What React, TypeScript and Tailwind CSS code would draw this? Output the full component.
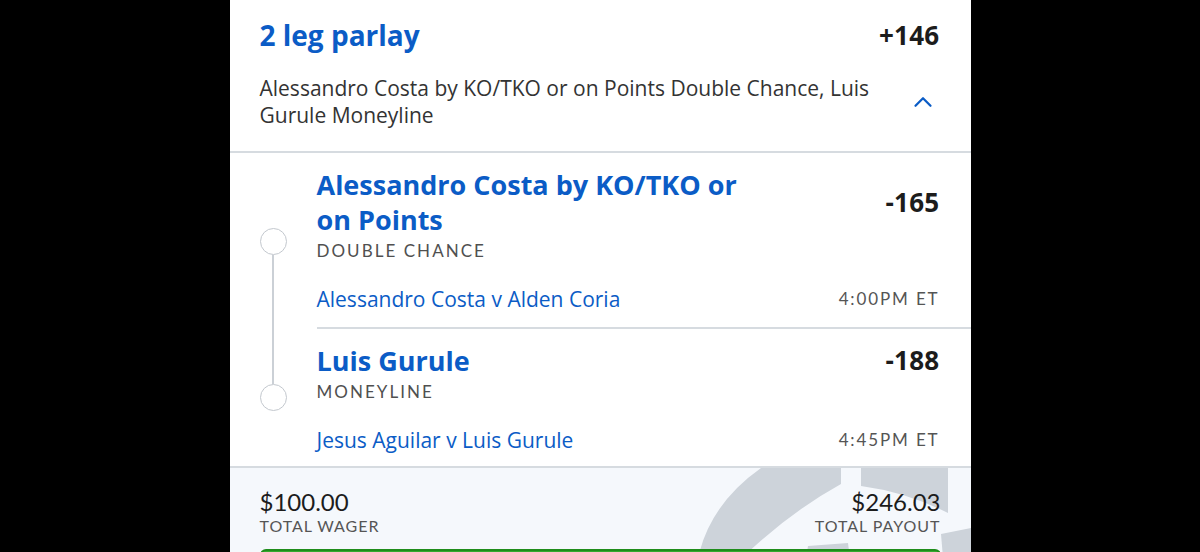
import { ChevronUp } from 'lucide-react'

const BLUE = 'text-[#0b5cc6]'
const WIDE = 'font-["Open_Sans",sans-serif]'

type Leg = {
  title: string
  market: string
  odds: string
  matchup: string
  time: string
}

const legs: Leg[] = [
  {
    title: 'Alessandro Costa by KO/TKO or on Points',
    market: 'DOUBLE CHANCE',
    odds: '-165',
    matchup: 'Alessandro Costa v Alden Coria',
    time: '4:00PM ET',
  },
  {
    title: 'Luis Gurule',
    market: 'MONEYLINE',
    odds: '-188',
    matchup: 'Jesus Aguilar v Luis Gurule',
    time: '4:45PM ET',
  },
]

function LegRow({ leg, first, last }: { leg: Leg; first: boolean; last: boolean }) {
  return (
    <div className="flex">
      {/* timeline */}
      <div className="flex w-[87px] shrink-0 flex-col items-center">
        <div className={`w-[2px] flex-1 ${first ? '' : 'bg-[#cbd0d6]'}`} />
        <div className="h-[27px] w-[27px] rounded-full border-[1.5px] border-[#c3c8ce] bg-white" />
        <div className={`w-[2px] flex-1 ${last ? '' : 'bg-[#cbd0d6]'}`} />
      </div>

      <div
        className={`flex-1 pr-[31px] pt-[14px] ${last ? 'pb-[14px]' : 'border-b-2 border-[#d6dbe0] pb-[16px]'}`}
      >
        <div className="flex items-center justify-between">
          <div className={`${WIDE} w-[440px] text-[27px] font-bold leading-[35px] ${BLUE}`}>{leg.title}</div>
          <div className={`${WIDE} text-[26px] font-bold leading-[35px] tracking-[0.01em] text-[#1c1c1c]`}>
            {leg.odds}
          </div>
        </div>
        <div className="mt-[3px] text-[17px] leading-[22px] tracking-[0.12em] text-[#505050]">{leg.market}</div>
        <div className="mt-[25px] flex items-center justify-between">
          <span className={`${WIDE} text-[21px] leading-[24px] ${BLUE}`}>{leg.matchup}</span>
          <span className="text-[17px] leading-[24px] tracking-[0.11em] text-[#555]">{leg.time}</span>
        </div>
      </div>
    </div>
  )
}

export default function App() {
  return (
    <div className="h-[552px] w-full overflow-hidden bg-black" style={{ fontFamily: 'Lato, "Open Sans", sans-serif' }}>
      <div className="mx-auto w-[741px] bg-white">
        {/* header */}
        <div className="border-b-2 border-[#d6dbe0] pb-[22px] pl-[30px] pr-[31px] pt-[17px]">
          <div className="flex items-center justify-between">
            <div className={`${WIDE} text-[28px] font-bold leading-[36px] ${BLUE}`}>2 leg parlay</div>
            <div className={`${WIDE} text-[26px] font-bold leading-[36px] tracking-[0.01em] text-[#1c1c1c]`}>+146</div>
          </div>
          <div className="mt-[22px] flex items-center">
            <p className={`${WIDE} w-[640px] text-[21px] leading-[27px] text-[#333]`}>
              Alessandro Costa by KO/TKO or on Points Double Chance, Luis Gurule Moneyline
            </p>
            <ChevronUp className="ml-auto mr-[2px] h-[30px] w-[30px] text-[#0b5cc6]" strokeWidth={1.8} />
          </div>
        </div>

        {/* legs */}
        <div>
          {legs.map((leg, i) => (
            <LegRow key={leg.title} leg={leg} first={i === 0} last={i === legs.length - 1} />
          ))}
        </div>

        {/* totals */}
        <div className="relative overflow-hidden border-t-2 border-[#d6dbe0] bg-[#f5f8fc] px-[30px] pb-[20px] pt-[20px]">
          <svg
            className="pointer-events-none absolute left-0 top-0"
            width="741"
            height="90"
            viewBox="0 0 741 90"
            fill="#cdd3da"
          >
            <path d="M531 0 L611 0 L611 16 Q560 44 512 90 L468 90 Q480 36 531 0 Z" />
            <path d="M631 0 L718 0 L718 45 Q676 24 631 18 Z" />
            <path d="M578 78 L618 75 L620 90 L576 90 Z" />
            <path d="M711 66 L741 60 L741 90 L713 90 Z" />
          </svg>
          <div className="relative flex items-start justify-between">
            <div>
              <div className="text-[24px] leading-[28px] text-[#1c1c1c]">$100.00</div>
              <div className="text-[16px] leading-[20px] tracking-[0.06em] text-[#555]">TOTAL WAGER</div>
            </div>
            <div className="text-right">
              <div className="text-[24px] leading-[28px] text-[#1c1c1c]">$246.03</div>
              <div className="text-[16px] leading-[20px] tracking-[0.06em] text-[#555]">TOTAL PAYOUT</div>
            </div>
          </div>
          <div className="relative mt-[13px] h-[56px] rounded-[6px] border-2 border-[#1f8d1b] bg-[#35a92f]" />
        </div>
      </div>
    </div>
  )
}
